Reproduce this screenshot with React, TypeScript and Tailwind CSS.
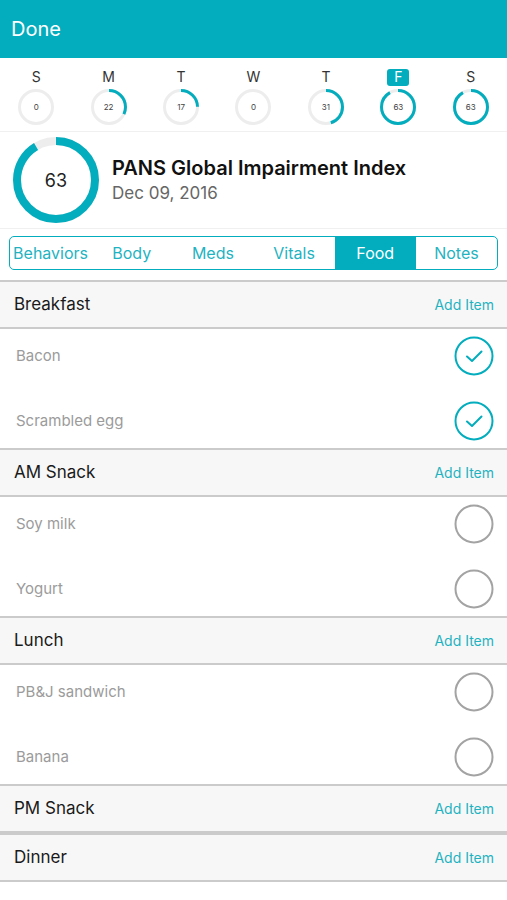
import React from 'react';

const TEAL = '#03adbd';

const days = [
  { letter: 'S', value: 0 },
  { letter: 'M', value: 22 },
  { letter: 'T', value: 17 },
  { letter: 'W', value: 0 },
  { letter: 'T', value: 31 },
  { letter: 'F', value: 63, active: true },
  { letter: 'S', value: 63 },
];

const tabs = ['Behaviors', 'Body', 'Meds', 'Vitals', 'Food', 'Notes'];

const meals: { name: string; items: { label: string; done: boolean }[] }[] = [
  { name: 'Breakfast', items: [{ label: 'Bacon', done: true }, { label: 'Scrambled egg', done: true }] },
  { name: 'AM Snack', items: [{ label: 'Soy milk', done: false }, { label: 'Yogurt', done: false }] },
  { name: 'Lunch', items: [{ label: 'PB&J sandwich', done: false }, { label: 'Banana', done: false }] },
  { name: 'PM Snack', items: [] },
  { name: 'Dinner', items: [] },
];

// progress ring, starts at 12 o'clock and runs clockwise
const Ring: React.FC<{ size: number; stroke: number; value: number; max?: number }> = ({ size, stroke, value, max = 69 }) => {
  const r = (size - stroke) / 2;
  const c = 2 * Math.PI * r;
  const frac = Math.min(value / max, 1);
  return (
    <svg width={size} height={size} className="-rotate-90">
      <circle cx={size / 2} cy={size / 2} r={r} fill="none" stroke="#ededed" strokeWidth={stroke} />
      {frac > 0 && (
        <circle
          cx={size / 2}
          cy={size / 2}
          r={r}
          fill="none"
          stroke={TEAL}
          strokeWidth={stroke}
          strokeDasharray={`${c * frac} ${c}`}
        />
      )}
    </svg>
  );
};

const CheckCircle: React.FC<{ done: boolean }> = ({ done }) => (
  <svg width="40" height="40" viewBox="0 0 40 40">
    <circle cx="20" cy="20" r="18.5" fill="none" stroke={done ? TEAL : '#a3a3a3'} strokeWidth="2" />
    {done && (
      <path d="M13 20.5 L18 25 L27.5 15.5" fill="none" stroke={TEAL} strokeWidth="2" strokeLinecap="round" strokeLinejoin="round" />
    )}
  </svg>
);

export default function App() {
  return (
    <div className="w-[507px] h-[900px] bg-white overflow-hidden" style={{ fontFamily: 'Inter, "Liberation Sans", sans-serif' }}>
      {/* top bar */}
      <div className="h-[58px] bg-[#03adbd] flex items-center pl-[11px]">
        <span className="text-white text-[20px] leading-none">Done</span>
      </div>

      {/* week strip */}
      <div className="grid grid-cols-7 pt-[10px] h-[74px] border-b border-[#f0f0f0]">
        {days.map((d, i) => (
          <div key={i} className="flex flex-col items-center">
            <div className="h-[18px] flex items-center">
              {d.active ? (
                <span className="bg-[#03adbd] text-white text-[14px] leading-none rounded-[3px] w-[22px] h-[17px] flex items-center justify-center">{d.letter}</span>
              ) : (
                <span className="text-[#333] text-[14px] leading-none">{d.letter}</span>
              )}
            </div>
            <div className="relative w-[36px] h-[36px] mt-[3px]">
              <Ring size={36} stroke={3} value={d.value} />
              <span className="absolute inset-0 flex items-center justify-center text-[8px] text-[#444]">{d.value}</span>
            </div>
          </div>
        ))}
      </div>

      {/* score */}
      <div className="h-[97px] flex items-center pl-[13px] border-b border-[#f0f0f0]">
        <div className="relative w-[86px] h-[86px]">
          <Ring size={86} stroke={8} value={63} />
          <span className="absolute inset-0 flex items-center justify-center text-[18px] text-[#222]">63</span>
        </div>
        <div className="ml-[13px]">
          <div className="text-[20px] font-semibold text-[#111] leading-[26px]">PANS Global Impairment Index</div>
          <div className="text-[17px] text-[#666] leading-[24px]">Dec 09, 2016</div>
        </div>
      </div>

      {/* segmented control */}
      <div className="px-[9px] pt-[7px] pb-[10px]">
        <div className="h-[34px] grid grid-cols-6 border-[1.5px] border-[#03adbd] rounded-[5px] overflow-hidden">
          {tabs.map((t) => (
            <div
              key={t}
              className={`flex items-center justify-center text-[16px] ${t === 'Food' ? 'bg-[#03adbd] text-white' : 'text-[#1fb3c1]'}`}
            >
              {t}
            </div>
          ))}
        </div>
      </div>

      {/* meals */}
      {meals.map((m) => (
        <div key={m.name}>
          <div className="h-[49px] bg-[#f7f7f7] border-y-2 border-[#cbcbcb] flex items-center justify-between pl-[14px] pr-[13px]">
            <span className="text-[17px] text-[#1a1a1a]">{m.name}</span>
            <span className="text-[14px] text-[#1fb3c1]">Add Item</span>
          </div>
          {m.items.length > 0 && (
            <div className="h-[119px] flex flex-col justify-between">
              {m.items.map((it) => (
                <div key={it.label} className="h-[54px] flex items-center justify-between pl-[16px] pr-[13px]">
                  <span className="text-[15px] text-[#9b9b9b]">{it.label}</span>
                  <CheckCircle done={it.done} />
                </div>
              ))}
            </div>
          )}
        </div>
      ))}
    </div>
  );
}
